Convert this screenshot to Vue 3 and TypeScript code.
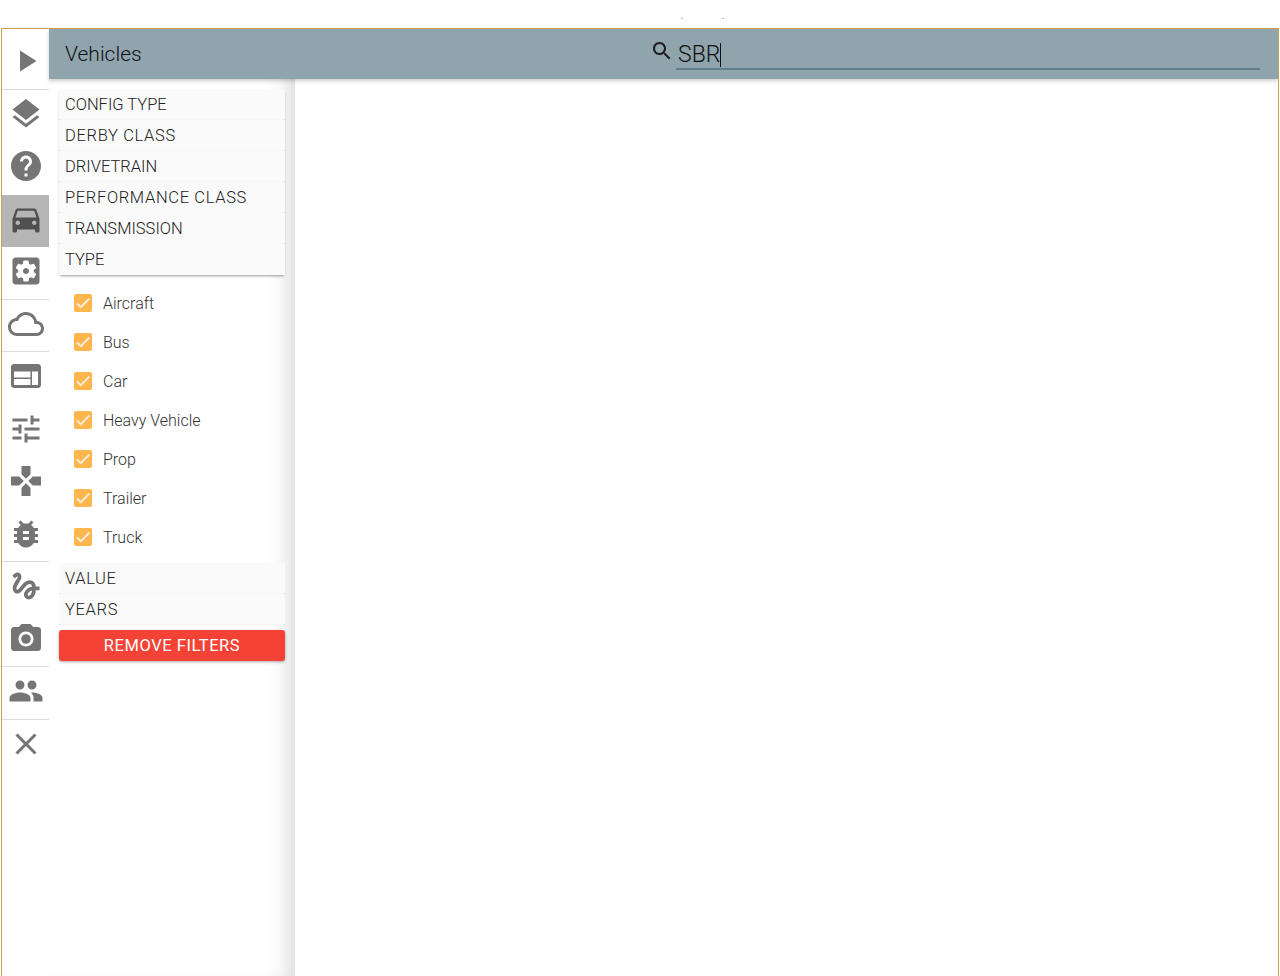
<script setup lang="ts">
interface RailItem { name: string; paths: string[]; divider?: boolean; active?: boolean; lead?: boolean }
interface FilterRow { label: string; wide?: boolean }

const rail: RailItem[] = [
  { name: 'play', lead: true, divider: true, paths: ['M8 5v14l11-7z'] },
  { name: 'layers', paths: ['M11.99 18.54l-7.37-5.73L3 14.07l9 7 9-7-1.63-1.27-7.38 5.74zM12 16l7.36-5.73L21 9l-9-7-9 7 1.63 1.27L12 16z'] },
  { name: 'help', paths: ['M12 2C6.48 2 2 6.48 2 12s4.48 10 10 10 10-4.48 10-10S17.52 2 12 2zm1 17h-2v-2h2v2zm2.07-7.75l-.9.92C13.45 12.9 13 13.5 13 15h-2v-.5c0-1.1.45-2.1 1.17-2.83l1.24-1.26c.37-.36.59-.86.59-1.41 0-1.1-.9-2-2-2s-2 .9-2 2H8c0-2.21 1.79-4 4-4s4 1.79 4 4c0 .88-.36 1.68-.93 2.25z'] },
  { name: 'car', active: true, paths: ['M18.92 6.01C18.72 5.42 18.16 5 17.5 5h-11c-.66 0-1.21.42-1.42 1.01L3 12v8c0 .55.45 1 1 1h1c.55 0 1-.45 1-1v-1h12v1c0 .55.45 1 1 1h1c.55 0 1-.45 1-1v-8l-2.08-5.99zM6.5 16c-.83 0-1.5-.67-1.5-1.5S5.67 13 6.5 13s1.5.67 1.5 1.5S7.33 16 6.5 16zm11 0c-.83 0-1.5-.67-1.5-1.5s.67-1.5 1.5-1.5 1.5.67 1.5 1.5-.67 1.5-1.5 1.5zM5 11l1.5-4.5h11L19 11H5z'] },
  { name: 'settings', divider: true, paths: ['M12 10c-1.1 0-2 .9-2 2s.9 2 2 2 2-.9 2-2-.9-2-2-2zm7-7H5c-1.11 0-2 .9-2 2v14c0 1.1.89 2 2 2h14c1.11 0 2-.9 2-2V5c0-1.1-.89-2-2-2zm-1.75 9c0 .23-.02.46-.05.68l1.48 1.16c.13.11.17.3.08.45l-1.4 2.42c-.09.15-.27.21-.43.15l-1.74-.7c-.36.28-.76.51-1.18.69l-.26 1.85c-.03.17-.18.3-.35.3h-2.8c-.17 0-.32-.13-.35-.29l-.26-1.85c-.43-.18-.82-.41-1.18-.69l-1.74.7c-.16.06-.34 0-.43-.15l-1.4-2.42c-.09-.15-.05-.34.08-.45l1.48-1.16c-.03-.23-.05-.46-.05-.69 0-.23.02-.46.05-.68l-1.48-1.16c-.13-.11-.17-.3-.08-.45l1.4-2.42c.09-.15.27-.21.43-.15l1.74.7c.36-.28.76-.51 1.18-.69l.26-1.85c.03-.17.18-.3.35-.3h2.8c.17 0 .32.13.35.29l.26 1.85c.43.18.82.41 1.18.69l1.74-.7c.16-.06.34 0 .43.15l1.4 2.42c.09.15.05.34-.08.45l-1.48 1.16c.03.23.05.46.05.69z'] },
  { name: 'cloud', divider: true, paths: ['M19.35 10.04C18.67 6.59 15.64 4 12 4 9.11 4 6.6 5.64 5.35 8.04 2.34 8.36 0 10.91 0 14c0 3.31 2.69 6 6 6h13c2.76 0 5-2.24 5-5 0-2.64-2.05-4.78-4.65-4.96zM19 18H6c-2.21 0-4-1.79-4-4s1.79-4 4-4h.71C7.37 7.69 9.48 6 12 6c3.04 0 5.5 2.46 5.5 5.5v.5H19c1.66 0 3 1.34 3 3s-1.34 3-3 3z'] },
  { name: 'web', paths: ['M20 4H4c-1.1 0-1.99.9-1.99 2L2 18c0 1.1.9 2 2 2h16c1.1 0 2-.9 2-2V6c0-1.1-.9-2-2-2zm-5 14H4v-4h11v4zm0-5H4V9h11v4zm5 5h-4V9h4v9z'] },
  { name: 'tune', paths: ['M3 17v2h6v-2H3zM3 5v2h10V5H3zm10 16v-2h8v-2h-8v-2h-2v6h2zM7 9v2H3v2h4v2h2V9H7zm14 4v-2H11v2h10zm-6-4h2V7h4V5h-4V3h-2v6z'] },
  { name: 'gamepad', paths: ['M15 7.5V2H9v5.5l3 3 3-3zM7.5 9H2v6h5.5l3-3-3-3zM9 16.5V22h6v-5.5l-3-3-3 3zM16.5 9l-3 3 3 3H22V9h-5.5z'] },
  { name: 'bug', divider: true, paths: ['M20 8h-2.81c-.45-.78-1.07-1.45-1.82-1.96L17 4.41 15.59 3l-2.17 2.17C12.96 5.06 12.49 5 12 5c-.49 0-.96.06-1.41.17L8.41 3 7 4.41l1.62 1.63C7.88 6.55 7.26 7.22 6.81 8H4v2h2.09c-.05.33-.09.66-.09 1v1H4v2h2v1c0 .34.04.67.09 1H4v2h2.81c1.04 1.79 2.97 3 5.19 3s4.15-1.21 5.19-3H20v-2h-2.09c.05-.33.09-.66.09-1v-1h2v-2h-2v-1c0-.34-.04-.67-.09-1H20V8zm-6 8h-4v-2h4v2zm0-4h-4v-2h4v2z'] },
  { name: 'gesture', paths: ['M4.59 6.89c.7-.71 1.4-1.35 1.71-1.22.5.2 0 1.03-.3 1.52-.25.42-2.86 3.89-2.86 6.31 0 1.28.48 2.34 1.34 2.98.75.56 1.74.73 2.64.46 1.07-.31 1.95-1.4 3.06-2.77 1.21-1.49 2.83-3.44 4.08-3.44 1.63 0 1.65 1.01 1.76 1.79-3.78.64-5.38 3.67-5.38 5.37 0 1.7 1.44 3.09 3.21 3.09 1.63 0 4.29-1.33 4.69-6.1H21v-2.5h-2.47c-.15-1.65-1.09-4.2-4.03-4.2-2.25 0-4.18 1.91-4.94 2.84-.58.73-2.06 2.48-2.29 2.72-.25.3-.68.84-1.11.84-.45 0-.72-.83-.36-1.92.35-1.09 1.4-2.86 1.85-3.52.78-1.14 1.3-1.92 1.3-3.28C8.95 3.69 7.31 3 6.44 3 5.12 3 3.97 4 3.72 4.25c-.36.36-.66.66-.88.93l1.75 1.71zm9.29 11.66c-.31 0-.74-.26-.74-.72 0-.6.73-2.2 2.87-2.76-.3 2.69-1.43 3.48-2.13 3.48z'] },
  { name: 'camera', divider: true, paths: ['M12 8.8a3.2 3.2 0 1 0 0 6.4 3.2 3.2 0 0 0 0-6.4z', 'M9 2L7.17 4H4c-1.1 0-2 .9-2 2v12c0 1.1.9 2 2 2h16c1.1 0 2-.9 2-2V6c0-1.1-.9-2-2-2h-3.17L15 2H9zm3 15c-2.76 0-5-2.24-5-5s2.24-5 5-5 5 2.24 5 5-2.24 5-5 5z'] },
  { name: 'people', divider: true, paths: ['M16 11c1.66 0 2.99-1.34 2.99-3S17.66 5 16 5c-1.66 0-3 1.34-3 3s1.34 3 3 3zm-8 0c1.66 0 2.99-1.34 2.99-3S9.66 5 8 5C6.34 5 5 6.34 5 8s1.34 3 3 3zm0 2c-2.33 0-7 1.17-7 3.5V19h14v-2.5c0-2.33-4.67-3.5-7-3.5zm8 0c-.29 0-.62.02-.97.05 1.16.84 1.97 1.97 1.97 3.45V19h6v-2.5c0-2.33-4.67-3.5-7-3.5z'] },
  { name: 'close', paths: ['M19 6.41L17.59 5 12 10.59 6.41 5 5 6.41 10.59 12 5 17.59 6.41 19 12 13.41 17.59 19 19 17.59 13.41 12z'] },
]

const filtersTop: FilterRow[] = [
  { label: 'CONFIG TYPE' },
  { label: 'DERBY CLASS', wide: true },
  { label: 'DRIVETRAIN' },
  { label: 'PERFORMANCE CLASS', wide: true },
  { label: 'TRANSMISSION' },
  { label: 'TYPE' },
]
const types = ['Aircraft', 'Bus', 'Car', 'Heavy Vehicle', 'Prop', 'Trailer', 'Truck']
const filtersBottom: FilterRow[] = [
  { label: 'VALUE', wide: true },
  { label: 'YEARS', wide: true },
]
</script>

<template>
  <div class="page">
    <span class="speck speck-a"></span>
    <span class="speck speck-b"></span>
    <div class="frame">
      <nav class="rail">
        <div
          v-for="item in rail"
          :key="item.name"
          class="rail-item"
          :class="{ divider: item.divider, active: item.active, lead: item.lead }"
        >
          <svg class="rail-icon" viewBox="0 0 24 24">
            <path v-for="(d, i) in item.paths" :key="i" :d="d" />
          </svg>
        </div>
      </nav>
      <div class="main">
        <header class="topbar">
          <div class="title">Vehicles</div>
          <div class="search">
            <svg class="search-icon" viewBox="0 0 24 24">
              <path d="M15.5 14h-.79l-.28-.27C15.41 12.59 16 11.11 16 9.5 16 5.91 13.09 3 9.5 3S3 5.91 3 9.5 5.91 16 9.5 16c1.61 0 3.09-.59 4.23-1.57l.27.28v.79l5 4.99L20.49 19l-4.99-5zm-6 0C7.01 14 5 11.99 5 9.5S7.01 5 9.5 5 14 7.01 14 9.5 11.99 14 9.5 14z" />
            </svg>
            <div class="search-field"><span class="search-text">SBR</span><span class="caret"></span></div>
          </div>
        </header>
        <div class="body">
          <aside class="sidebar">
            <div class="panel raised">
              <div v-for="f in filtersTop" :key="f.label" class="row" :class="{ wide: f.wide }">{{ f.label }}</div>
            </div>
            <div class="checks">
              <label v-for="t in types" :key="t" class="check">
                <span class="box">
                  <svg viewBox="0 0 24 24"><path d="M9 16.17L4.83 12l-1.42 1.41L9 19 21 7l-1.41-1.41z" /></svg>
                </span>
                <span class="check-label">{{ t }}</span>
              </label>
            </div>
            <div class="panel">
              <div v-for="f in filtersBottom" :key="f.label" class="row" :class="{ wide: f.wide }">{{ f.label }}</div>
            </div>
            <button class="remove" type="button">REMOVE FILTERS</button>
          </aside>
          <section class="content"></section>
        </div>
      </div>
    </div>
  </div>
</template>

<style>
html, body { margin: 0; height: 976px; overflow: hidden; background: #fff; }
</style>

<style scoped>
.page {
  position: relative;
  box-sizing: border-box;
  height: 976px;
  padding: 28px 1px 0 1px;
  font-family: Roboto, "Liberation Sans", sans-serif;
  font-weight: 300;
  background: #fff;
}
.speck {
  position: absolute;
  top: 18px;
  width: 2px;
  height: 1px;
  background: #a9bdb6;
}
.speck-a { left: 681px; }
.speck-b { left: 722px; }
.frame {
  display: flex;
  box-sizing: border-box;
  height: 948px;
  border: 1px solid #c4a24f;
  border-bottom: 0;
  overflow: hidden;
}
.rail {
  position: relative;
  flex: 0 0 47px;
  width: 47px;
  display: flex;
  flex-direction: column;
  background: #fff;
  box-shadow: 1px 0 3px rgba(0, 0, 0, 0.25);
}
.rail-item {
  box-sizing: border-box;
  height: 52.5px;
  padding-top: 6px;
  display: flex;
  justify-content: center;
  align-items: flex-start;
}
.rail-item.lead { height: 60.6px; padding-top: 14px; }
.rail-item.divider { border-bottom: 1px solid #dcdcdc; }
.rail-item.active { background: #b5b5b5; }
.rail-icon { width: 36px; height: 36px; fill: #757575; display: block; flex: none; }
.rail-item.active .rail-icon { fill: #505050; }
.main {
  position: relative;
  flex: 1;
  min-width: 0;
  display: flex;
  flex-direction: column;
}
.topbar {
  position: relative;
  z-index: 2;
  flex: 0 0 50px;
  display: flex;
  align-items: flex-start;
  background: #90a4ae;
  box-shadow: 0 2px 4px rgba(0, 0, 0, 0.2);
}
.title {
  padding: 12px 0 0 16px;
  font-size: 21px;
  line-height: 26px;
  color: #111;
  width: 585px;
}
.search {
  display: flex;
  align-items: flex-start;
  flex: 1;
  padding-right: 18px;
}
.search-icon { width: 24px; height: 24px; margin: 10px 2px 0 0; flex: none; fill: #1c1c1c; }
.search-field {
  flex: 1;
  display: flex;
  align-items: flex-start;
  box-sizing: border-box;
  height: 41px;
  padding: 13px 0 0 2px;
  border-bottom: 2px solid #607d8b;
}
.search-text { font-size: 23px; line-height: 26px; color: #111; }
.caret { width: 1px; height: 24px; margin-top: 1px; background: #111; }
.body { flex: 1; display: flex; min-height: 0; }
.sidebar {
  box-sizing: border-box;
  flex: 0 0 246px;
  padding: 10px 10px 0;
  display: flex;
  flex-direction: column;
  background: #fff;
  box-shadow: inset -22px 0 24px -18px rgba(0, 0, 0, 0.18);
}
.panel { border-radius: 2px; }
.panel.raised { box-shadow: 0 2px 3px -1px rgba(0, 0, 0, 0.4); }
.row {
  box-sizing: border-box;
  height: 31px;
  padding: 1px 0 0 6px;
  font-size: 16.5px;
  line-height: 30px;
  color: #222;
  background-color: #fafafa;
  background-image:
    linear-gradient(#d8d8d8, #d8d8d8),
    linear-gradient(#d8d8d8, #d8d8d8),
    linear-gradient(#f6f6f6, #f6f6f6);
  background-size: 1px 1px, 1px 1px, 100% 1px;
  background-position: left bottom, right bottom, left bottom;
  background-repeat: no-repeat;
}
.row.wide { letter-spacing: 0.65px; }
.raised .row:last-child { background-image: none; }
.checks {
  padding: 9px 0 6px 15px;
  display: flex;
  flex-direction: column;
}
.check { display: flex; align-items: center; height: 39px; }
.box {
  flex: none;
  box-sizing: border-box;
  width: 18px;
  height: 18px;
  margin-bottom: 1px;
  border-radius: 2px;
  background: #ffb74d;
  display: flex;
  align-items: center;
  justify-content: center;
}
.box svg { width: 18px; height: 18px; fill: #f7efe0; stroke: #f7efe0; stroke-width: 0.8px; display: block; }
.check-label { margin-left: 11px; font-size: 16px; color: #333; }
.remove {
  margin-top: 5px;
  height: 31px;
  border: 0;
  padding: 0;
  border-radius: 3px;
  background: #f44336;
  color: #fff;
  font-family: inherit;
  font-weight: 400;
  font-size: 16.5px;
  letter-spacing: 0.55px;
  box-shadow: 0 1px 3px rgba(0, 0, 0, 0.35);
}
.content { flex: 1; background: #fff; }
</style>
